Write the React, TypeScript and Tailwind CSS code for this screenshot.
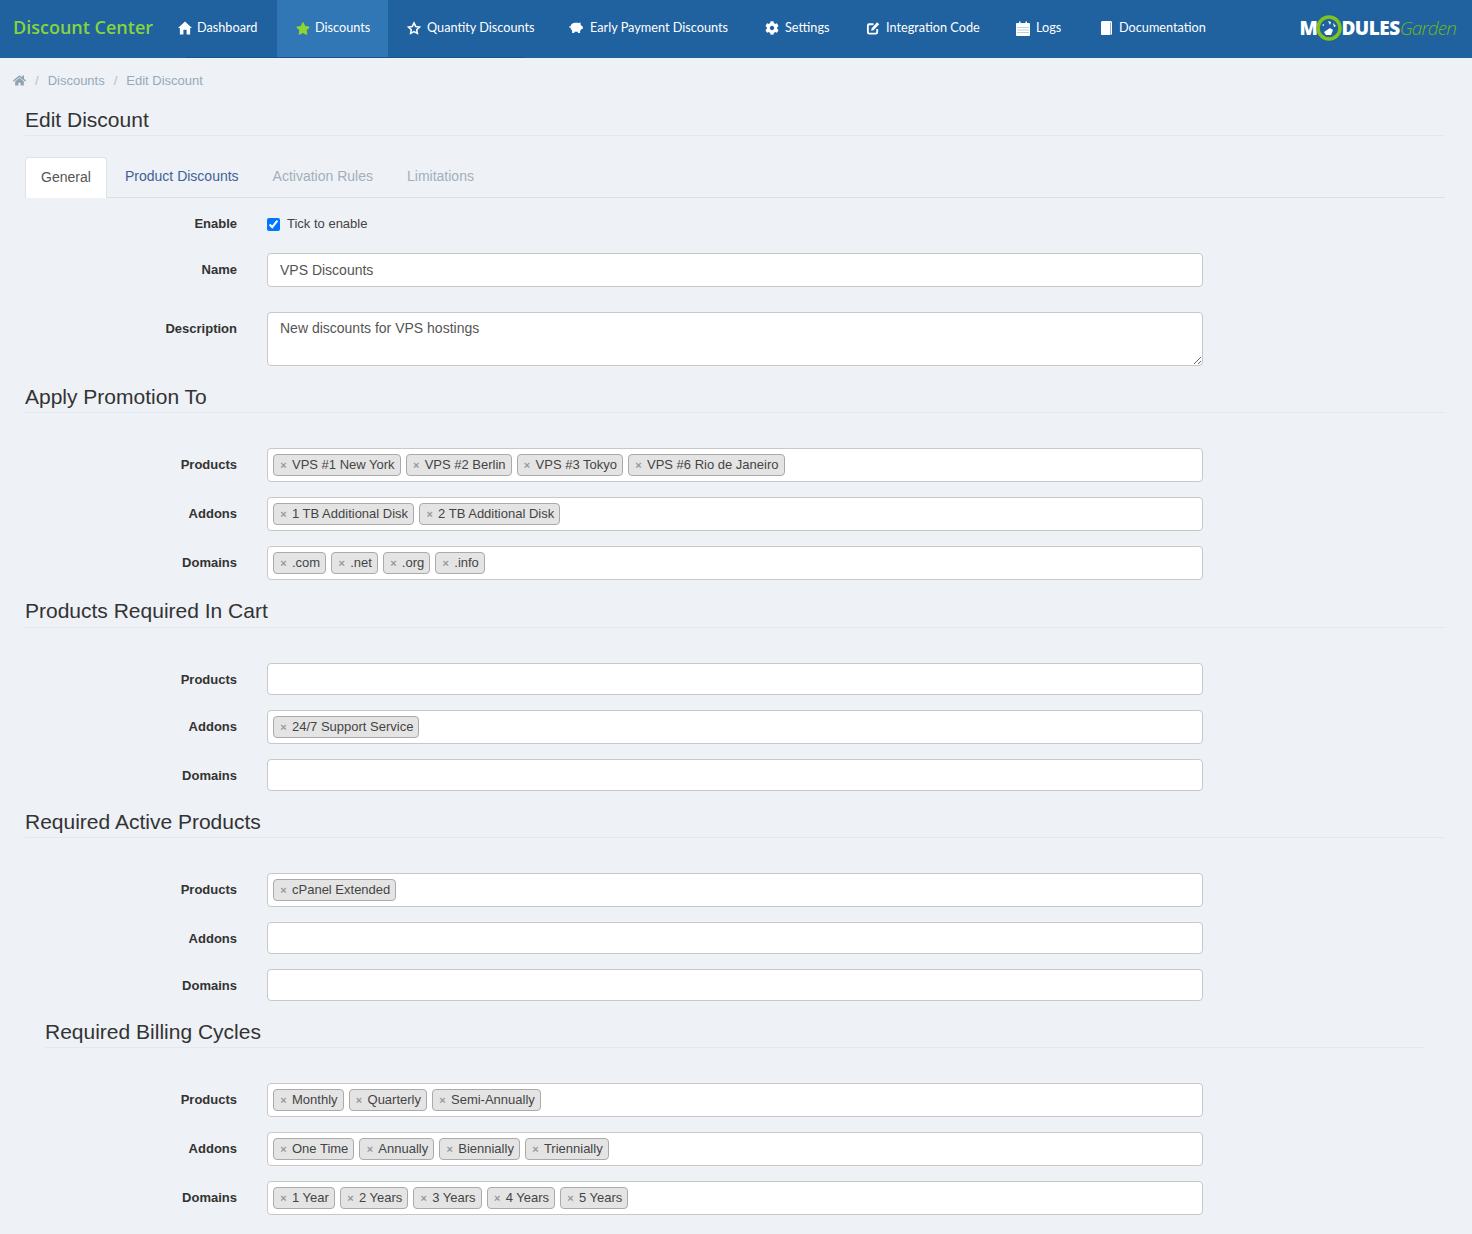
import type { ReactNode } from "react";
import { FaCog, FaHome, FaStar } from "react-icons/fa";

function HomeIcon() {
  return (
    <svg className="h-[14px] w-[15px]" viewBox="0 0 15 14" fill="#fff">
      <path d="M7.500 0L15 7h-2v7H9.200V9H5.800v5H2V7H0z" />
    </svg>
  );
}

function StarOutlineIcon() {
  return (
    <svg className="h-[14px] w-[15px]" viewBox="0 0 15 14">
      <path
        d="M7.500 1.600l1.800 3.700 4.100.6-3 2.900.7 4-3.600-1.900-3.600 1.900.7-4-3-2.900 4.100-.6z"
        fill="#20619f"
        stroke="#fff"
        strokeWidth="1.700"
      />
    </svg>
  );
}

function PiggyIcon() {
  return (
    <svg className="h-[14px] w-[17px]" viewBox="0 0 17 14" fill="#fff">
      <path d="M3 2.500C4.500 1 6.500.500 9 .500c1 0 2 .2 2.800.5L14 .200v2.600c.7.6 1.100 1.300 1.400 2h1.300v3.400h-1.500c-.4.8-1 1.500-1.700 2V13h-2.700v-1.500H6.500V13H3.800v-2.800C2.500 9.200 1.800 7.800 1.800 6.500H.300V4.800h1.800c.2-.9.500-1.700.900-2.300z" />
    </svg>
  );
}

function EditIcon() {
  return (
    <svg className="h-[15px] w-[15px]" viewBox="0 0 15 15" fill="none">
      <path
        d="M8 3H3.500C2.500 3 2 3.500 2 4.500v7c0 1 .5 1.500 1.500 1.500h7c1 0 1.500-.5 1.500-1.500V8"
        stroke="#fff"
        strokeWidth="2"
      />
      <path d="M6 7.500L11.800.800l2.400 2.100L8 9.500l-2.500.5z" fill="#fff" />
    </svg>
  );
}

function CalendarIcon() {
  return (
    <svg className="h-[15px] w-[14px]" viewBox="0 0 14 15">
      <path d="M1 2h2V.500h1.500V2h5V.500H11V2h2c.5 0 1 .5 1 1v11c0 .5-.5 1-1 1H1c-.5 0-1-.5-1-1V3c0-.5.5-1 1-1z" fill="#fff" />
      <path
        d="M1.500 6.500h11M1.500 9h11M1.500 11.500h11"
        stroke="#7e9fc4"
        strokeDasharray="1 1"
      />
    </svg>
  );
}

function BookIcon() {
  return (
    <svg className="h-[14px] w-[13px]" viewBox="0 0 13 14" fill="#fff">
      <path d="M2 0h9.500v1H12v12.500h-1V1.500H2.500L2 1z" />
      <path d="M1 1.200c0-.5.5-1 1-1h8.500V14H2c-.6 0-1-.4-1-1z" />
    </svg>
  );
}

const navItems = [
  { label: "Dashboard", icon: <HomeIcon />, width: "w-[118px] gap-[5px]" },
  { label: "Discounts", icon: <FaStar className="h-[15px] w-[15px] text-[#8cd62f]" />, width: "w-[111px] gap-[5px]", active: true },
  { label: "Quantity Discounts", icon: <StarOutlineIcon />, width: "w-[162px] gap-[6px]" },
  { label: "Early Payment Discounts", icon: <PiggyIcon />, width: "w-[196px] gap-[7px]" },
  { label: "Settings", icon: <FaCog className="h-[14px] w-[14px]" />, width: "w-[101px] gap-[6px]" },
  { label: "Integration Code", icon: <EditIcon />, width: "w-[150px] gap-[6px]" },
  { label: "Logs", icon: <CalendarIcon />, width: "w-[83px] gap-[6px]" },
  { label: "Documentation", icon: <BookIcon />, width: "w-[144px] gap-[6px]" },
];

function Logo() {
  return (
    <div className="flex items-center font-['Open_Sans',sans-serif] text-[19px] leading-none">
      <span className="font-extrabold tracking-[-0.5px] text-white">M</span>
      <svg className="mx-[-1px] h-[26px] w-[26px]" viewBox="0 0 26 26">
        <circle cx="13" cy="13" r="11" fill="#20619f" stroke="#7fc31c" strokeWidth="3.500" />
        <path d="M8 17l6-4 3 2-2 5-5 0zM12 6l3 1-1 3zM17 8l3 3-2 1zM6 10l2-1 0 2z" fill="#fff" />
      </svg>
      <span className="font-extrabold tracking-[-0.5px] text-white">DULES</span>
      <span className="text-[19px] font-light italic tracking-[-0.9px] text-[#6fb81c]">Garden</span>
    </div>
  );
}

function Header() {
  return (
    <header className="relative flex h-[58px] items-center bg-[#20619f] font-['Lato',sans-serif] text-[12.700px] text-white">
      <div className="w-[159px] shrink-0 pb-[3px] pl-[13px] font-['Open_Sans',sans-serif] text-[18px] font-semibold text-[#86d53a]">
        Discount Center
      </div>
      <nav className="flex h-full">
        {navItems.map((item) => (
          <a
            className={`flex h-full items-center pb-[2px] pl-[19px] ${item.width} ${
              item.active ? "bg-[#3176b5]" : ""
            }`}
            href="#"
            key={item.label}
          >
            <span className="flex w-[14px] justify-center">{item.icon}</span>
            {item.label}
          </a>
        ))}
      </nav>
      <div className="ml-auto pr-[16px] pb-[2px]">
        <Logo />
      </div>
      <div className="absolute bottom-0 left-[186px] h-px w-[339px] bg-[#16548f]" />
    </header>
  );
}

function Heading({ children, inset, tall }: { children: ReactNode; inset?: boolean; tall?: boolean }) {
  return (
    <div className={inset ? "mx-[20px]" : ""}>
      <h2
        className={`border-b border-[#e4e7ec] pt-[16px] text-[21px] leading-[30px] text-[#333] ${
          tall ? "h-[48px]" : "h-[47px]"
        }`}
      >
        {children}
      </h2>
    </div>
  );
}

function Row({ label, children, className }: { label: string; children: ReactNode; className?: string }) {
  return (
    <div className={`flex items-start ${className ?? ""}`}>
      <label className="w-[212px] shrink-0 pt-[8px] text-right text-[13px] leading-[18px] font-bold text-[#333]">
        {label}
      </label>
      <div className="ml-[30px] w-[936px]">{children}</div>
    </div>
  );
}

function Tags({ items }: { items?: string[] }) {
  if (!items) {
    return <div className="h-[32px] rounded-[4px] border border-[#c8c8c8] bg-white" />;
  }
  return (
    <div className="flex h-[34px] items-center gap-[5px] rounded-[4px] border border-[#c8c8c8] bg-white pl-[5px]">
      {items.map((item) => (
        <span
          className="flex h-[22px] items-center rounded-[4px] border border-[#aaa] bg-[#e4e4e4] pr-[5px] pl-[5px] text-[13px] leading-[20px] text-[#444]"
          key={item}
        >
          <span className="mr-[4px] w-[9px] text-center text-[11px] font-bold text-[#999]">×</span>
          {item}
        </span>
      ))}
    </div>
  );
}

function TagSection({
  title,
  rows,
  inset,
  tall,
}: {
  title: string;
  rows: { label: string; items?: string[] }[];
  inset?: boolean;
  tall?: boolean;
}) {
  return (
    <section>
      <Heading inset={inset} tall={tall}>
        {title}
      </Heading>
      <div className="mt-[35px] flex flex-col gap-[15px]">
        {rows.map((row) => (
          <Row key={row.label} label={row.label}>
            <Tags items={row.items} />
          </Row>
        ))}
      </div>
    </section>
  );
}

export default function App() {
  return (
    <div className="h-[1234px] overflow-hidden bg-[#eef1f6] font-['Liberation_Sans',Arial,sans-serif] text-[#333]">
      <Header />
      <div className="flex h-[45px] items-center gap-[7px] pl-[13px] text-[13px] text-[#98a9b8]">
        <FaHome className="h-[13px] w-[13px] text-[#8fa3b3]" />
        <span className="mx-[2px] text-[#b4c0ca]">/</span>
        <span>Discounts</span>
        <span className="mx-[2px] text-[#b4c0ca]">/</span>
        <span>Edit Discount</span>
      </div>
      <main className="px-[25px] pr-[27px]">
        <h1 className="h-[33px] border-b border-[#e4e7ec] text-[21px] leading-[34px] text-[#333]">
          Edit Discount
        </h1>
        <div className="mt-[21px] flex h-[41px] items-stretch border-b border-[#dcdfe4] text-[14px]">
          <a className="mb-[-1px] flex w-[82px] items-center justify-center rounded-t-[4px] border border-b-0 border-[#dfe2e7] bg-white pb-[2px] text-[#555]" href="#">
            General
          </a>
          <a className="ml-[18px] flex items-center pb-[2px] text-[#3f6296]" href="#">Product Discounts</a>
          <a className="ml-[34px] flex items-center pb-[2px] text-[#a3afbb]" href="#">Activation Rules</a>
          <a className="ml-[34px] flex items-center pb-[2px] text-[#a3afbb]" href="#">Limitations</a>
        </div>

        <div className="mt-[18px] flex items-center">
          <span className="w-[212px] text-right text-[13px] leading-[16px] font-bold text-[#333]">Enable</span>
          <label className="ml-[30px] flex items-center text-[13px] leading-[16px] text-[#444]">
            <input className="m-0 h-[13px] w-[13px]" defaultChecked type="checkbox" />
            <span className="ml-[7px] mt-[-1px]">Tick to enable</span>
          </label>
        </div>
        <Row className="mt-[21px]" label="Name">
          <input
            className="block h-[34px] w-full rounded-[4px] border border-[#c8c8c8] bg-white px-[12px] text-[14px] text-[#555]"
            defaultValue="VPS Discounts"
          />
        </Row>
        <Row className="mt-[25px]" label="Description">
          <textarea
            className="block h-[54px] w-full rounded-[4px] border border-[#c8c8c8] bg-white px-[12px] py-[5px] text-[14px] leading-[20px] text-[#555]"
            defaultValue="New discounts for VPS hostings"
          />
        </Row>

        <TagSection
          rows={[
            { label: "Products", items: ["VPS #1 New York", "VPS #2 Berlin", "VPS #3 Tokyo", "VPS #6 Rio de Janeiro"] },
            { label: "Addons", items: ["1 TB Additional Disk", "2 TB Additional Disk"] },
            { label: "Domains", items: [".com", ".net", ".org", ".info"] },
          ]}
          title="Apply Promotion To"
        />
        <TagSection
          rows={[
            { label: "Products" },
            { label: "Addons", items: ["24/7 Support Service"] },
            { label: "Domains" },
          ]}
          tall
          title="Products Required In Cart"
        />
        <TagSection
          rows={[
            { label: "Products", items: ["cPanel Extended"] },
            { label: "Addons" },
            { label: "Domains" },
          ]}
          title="Required Active Products"
        />
        <TagSection
          inset
          rows={[
            { label: "Products", items: ["Monthly", "Quarterly", "Semi-Annually"] },
            { label: "Addons", items: ["One Time", "Annually", "Biennially", "Triennially"] },
            { label: "Domains", items: ["1 Year", "2 Years", "3 Years", "4 Years", "5 Years"] },
          ]}
          title="Required Billing Cycles"
        />
      </main>
    </div>
  );
}
